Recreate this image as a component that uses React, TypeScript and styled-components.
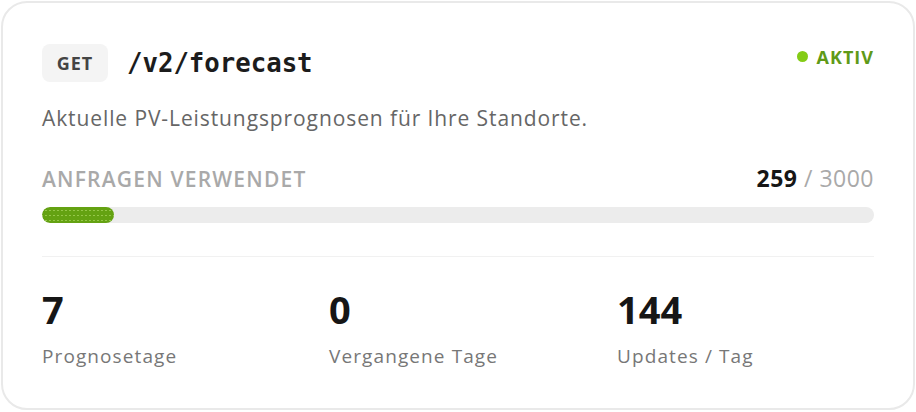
import React from "react";
import styled, { createGlobalStyle } from "styled-components";

const Global = createGlobalStyle`
  html, body { margin: 0; padding: 0; background: #ffffff; }
  * { box-sizing: border-box; }
`;

const Page = styled.div`
  padding: 1px;
  width: 916px;
  height: 412px;
`;

const Card = styled.div`
  width: 914px;
  height: 409px;
  border: 2px solid #e9e9e9;
  border-radius: 26px;
  background: #fff;
  padding: 41px 39px 0 39px;
  font-family: "Open Sans", "Noto Sans", sans-serif;
  display: flex;
  flex-direction: column;
`;

const Header = styled.div`
  display: flex;
  align-items: center;
  justify-content: space-between;
  height: 38px;
`;

const Endpoint = styled.div`
  display: flex;
  align-items: center;
  gap: 19px;
`;

const Method = styled.span`
  display: inline-flex;
  align-items: center;
  justify-content: center;
  width: 66px;
  height: 38px;
  border-radius: 8px;
  background: #f4f4f4;
  color: #444;
  font-weight: 700;
  font-size: 18px;
  letter-spacing: 1px;
`;

const Path = styled.span`
  font-family: "DejaVu Sans Mono", "Liberation Mono", monospace;
  font-weight: 700;
  font-size: 25.7px;
  color: #1c1c1c;
`;

const Status = styled.div`
  display: flex;
  align-items: center;
  gap: 9px;
  color: #5f9a18;
  font-weight: 700;
  font-size: 18px;
  letter-spacing: 1px;
  line-height: 24px;
  margin-top: -13px;
`;

const Dot = styled.span`
  width: 11px;
  height: 11px;
  border-radius: 50%;
  background: #84cc16;
`;

const Description = styled.p`
  margin: 22px 0 0 0;
  font-size: 21px;
  line-height: 28px;
  letter-spacing: 0.9px;
  color: #666;
`;

const UsageRow = styled.div`
  margin-top: 32px;
  display: flex;
  justify-content: space-between;
  align-items: baseline;
  line-height: 28px;
`;

const UsageLabel = styled.span`
  font-size: 21px;
  font-weight: 600;
  color: #a9a9a9;
  letter-spacing: 1.2px;
`;

const UsageValue = styled.span`
  font-size: 23px;
  letter-spacing: 0.5px;
  color: #a9a9a9;
`;

const UsageCount = styled.strong`
  color: #161616;
  font-weight: 700;
`;

const Track = styled.div`
  margin-top: 14px;
  height: 16px;
  border-radius: 8px;
  background: #ececec;
  overflow: hidden;
`;

const Fill = styled.div`
  height: 100%;
  border-radius: 8px;
  background-color: #64a212;
  background-image: radial-gradient(circle, rgba(190, 230, 120, 0.55) 0.7px, transparent 1px);
  background-size: 4px 5px;
  background-position: 2px 1px;
`;

const Divider = styled.hr`
  margin: 33px 0 0 0;
  border: none;
  border-top: 1px solid #f1f1f1;
`;

const Stats = styled.div`
  margin-top: 33px;
  display: grid;
  grid-template-columns: 287px 288px 1fr;
`;

const Stat = styled.div`
  display: flex;
  flex-direction: column;
  gap: 15px;
`;

const StatValue = styled.span`
  font-size: 38px;
  font-weight: 700;
  color: #161616;
  line-height: 1;
`;

const StatLabel = styled.span`
  font-size: 19px;
  line-height: 26px;
  letter-spacing: 1.1px;
  color: #777;
`;

const stats = [
  { value: "7", label: "Prognosetage" },
  { value: "0", label: "Vergangene Tage" },
  { value: "144", label: "Updates / Tag" },
];

export default function App() {
  const used = 259;
  const total = 3000;
  return (
    <Page>
      <Global />
      <Card>
        <Header>
          <Endpoint>
            <Method>GET</Method>
            <Path>/v2/forecast</Path>
          </Endpoint>
          <Status>
            <Dot />
            AKTIV
          </Status>
        </Header>
        <Description>Aktuelle PV-Leistungsprognosen für Ihre Standorte.</Description>
        <UsageRow>
          <UsageLabel>ANFRAGEN VERWENDET</UsageLabel>
          <UsageValue>
            <UsageCount>{used}</UsageCount> / {total}
          </UsageValue>
        </UsageRow>
        <Track>
          <Fill style={{ width: `${(used / total) * 100}%` }} />
        </Track>
        <Divider />
        <Stats>
          {stats.map((s) => (
            <Stat key={s.label}>
              <StatValue>{s.value}</StatValue>
              <StatLabel>{s.label}</StatLabel>
            </Stat>
          ))}
        </Stats>
      </Card>
    </Page>
  );
}
